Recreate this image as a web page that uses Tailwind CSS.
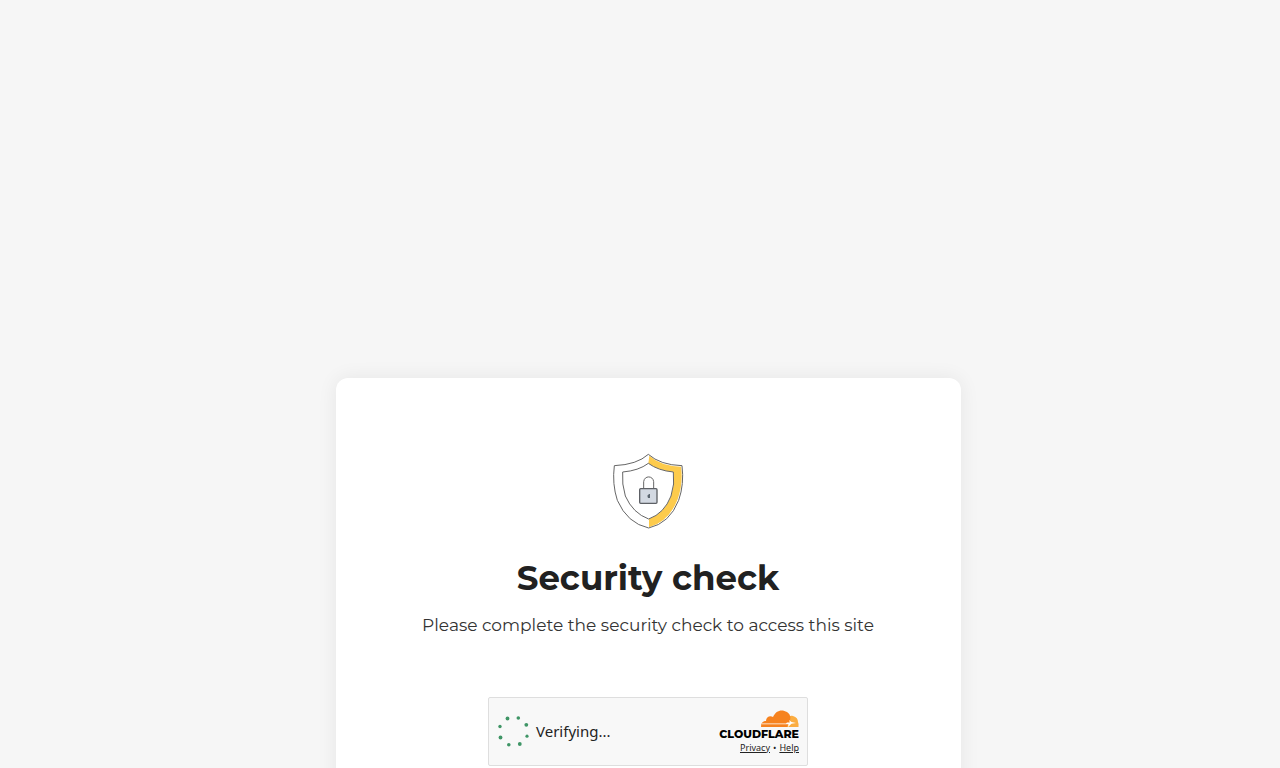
<!DOCTYPE html>
<html lang="en">
<head>
<meta charset="utf-8">
<meta name="viewport" content="width=device-width, initial-scale=1">
<title>Security check</title>
<script src="https://cdn.jsdelivr.net/npm/@tailwindcss/browser@4"></script>
</head>
<body class="bg-[#f6f6f6] font-['Montserrat','Inter',sans-serif] text-[#212121]">
<div class="h-screen overflow-hidden pt-[378px] pl-4">
  <main class="mx-auto flex w-full max-w-[625px] flex-col items-center rounded-xl bg-white px-6 pt-[75px] pb-20 shadow-[0_0_20px_rgba(0,0,0,0.07)]">
    <svg class="h-[76px] w-[72px]" viewBox="36 24 216 228" fill="none" aria-hidden="true">
      <path d="M148 32Q180 62 243 65Q250 115 233 163Q207 230 147 247L147 220Q193 204 213 154Q224 117 220 81Q176 77 145 56Z" fill="#fdcb4c"/>
      <path d="M145 28Q181 60 246 62Q253 117 236 166Q209 235 146 249Q82 235 52 166Q36 117 43 62Q111 59 145 28Z" stroke="#666" stroke-width="3" stroke-linejoin="round"/>
      <path d="M145 55Q175 77 220 81Q225 117 213 153Q193 205 146 222Q99 205 76 153Q65 117 68 81Q116 77 145 55Z" fill="#fff" stroke="#666" stroke-width="3" stroke-linejoin="round"/>
      <path d="M131 130V110C133 91 159 91 161 110V130" stroke="#666" stroke-width="3"/>
      <rect x="119" y="131" width="52" height="44" rx="3" fill="#d3d9e2" stroke="#5d6065" stroke-width="4"/>
      <path d="M147 147L142 152L144 159H150V147Z" fill="#5c6670"/>
    </svg>
    <h1 class="mt-[25px] text-[34px] leading-[48px] font-bold">Security check</h1>
    <p class="mt-[11px] text-[17px] leading-6 text-[#333]">Please complete the security check to access this site</p>
    <section class="mt-[60px] flex h-[69px] w-80 items-center justify-between rounded-xs border border-[#dedede] bg-[#f8f8f8] pr-2 pl-[9px] font-['Noto_Sans',sans-serif]" aria-label="Cloudflare verification">
      <div class="flex items-center gap-1.5 pb-0.5" role="status">
        <svg class="h-8 w-8" viewBox="0 0 32 32" fill="#3f9566" aria-hidden="true">
          <circle cx="9.5" cy="3.5" r="1.9"/><circle cx="20.3" cy="3" r="1.8"/><circle cx="28.3" cy="9.8" r="1.9"/><circle cx="29" cy="21.2" r="1.6"/><circle cx="21.8" cy="29" r="1.9"/><circle cx="10.8" cy="29.8" r="1.8"/><circle cx="2.5" cy="22.5" r="1.9"/><circle cx="2" cy="11.5" r="1.7"/>
        </svg>
        <span class="text-[15px] leading-5 text-[#232323]">Verifying...</span>
      </div>
      <div class="flex flex-col items-end pt-0.5">
        <svg class="h-[18px] w-[38px]" viewBox="0 0 38 18" aria-hidden="true">
          <path d="M27 8C28 5.5 30 5.3 32 6C35.5 7 37 9 37 12Q38 14 37.5 17H25Z" fill="#fbad41"/>
          <path d="M0 17C0 13 2 11 5 11C5 7 9 5 12 7C15 0 21-1 26 2C29 4 30 7 29 10L26 17Z" fill="#f6821f"/>
          <path d="M1 13.5H25L26 12.6H29L28 10L30.5 12L35 13L30.5 13.8L27 17L27.5 14.2H1Z" fill="#fff"/>
        </svg>
        <span class="font-['Montserrat','DejaVu_Sans',sans-serif] text-[11px] leading-3 font-extrabold text-black">CLOUDFLARE</span>
        <div class="flex gap-[3px] text-[9px] leading-4 text-[#232323]">
          <a href="#privacy" class="underline">Privacy</a><span>•</span><a href="#help" class="underline">Help</a>
        </div>
      </div>
    </section>
  </main>
</div>
</body>
</html>
